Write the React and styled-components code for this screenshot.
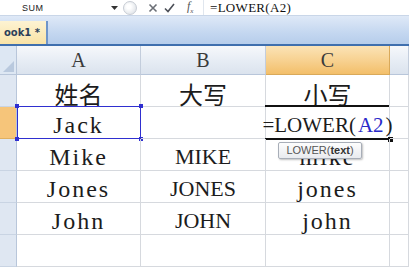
import React from 'react'
import styled, { createGlobalStyle } from 'styled-components'

const Global = createGlobalStyle`
  body {
    margin: 0;
    background: #fff;
    overflow: hidden;
  }
`

const serif = `"Liberation Serif", "Times New Roman", "DejaVu Serif", "Noto Sans CJK SC", serif`

const Page = styled.div`
  width: 409px;
  height: 272px;
  overflow: hidden;
  background: #fff;
  font-family: ${serif};
`

const FormulaBar = styled.div`
  display: flex;
  align-items: center;
  height: 15px;
  border-bottom: 1px solid #c9d6e8;
  background: #fff;
`

const NameBox = styled.div`
  width: 123px;
  display: flex;
  align-items: center;
  padding-left: 22px;
  box-sizing: border-box;
  font-family: "Liberation Sans", sans-serif;
  font-size: 9px;
  color: #222;
  letter-spacing: 0.5px;
  span {
    flex: 1;
  }
  svg {
    margin-right: 5px;
  }
`

const Tools = styled.div`
  display: flex;
  align-items: center;
  width: 80px;
  height: 15px;
  gap: 6px;
`

const Knob = styled.div`
  width: 14px;
  height: 14px;
  border-radius: 50%;
  border: 1px solid #c7ccd4;
  background: radial-gradient(circle at 40% 40%, #fff 20%, #dfe3e8 80%);
  box-sizing: border-box;
  margin-right: 5px;
`

const Fx = styled.span`
  font-family: ${serif};
  font-style: italic;
  font-size: 12px;
  color: #555;
  margin-left: 6px;
`

const FormulaText = styled.div`
  flex: 1;
  padding-left: 6px;
  border-left: 1px solid #e0e6ee;
  height: 15px;
  line-height: 15px;
  font-family: ${serif};
  font-size: 13px;
  color: #111;
  letter-spacing: 0.3px;
`

const TabStrip = styled.div`
  height: 28px;
  display: flex;
  align-items: flex-end;
  background: linear-gradient(#dfe9f7, #c4d7f0 60%, #b6cdeb);
  border-bottom: 2px solid #3f6fae;
`

const Tab = styled.div`
  width: 48px;
  height: 23px;
  display: flex;
  align-items: center;
  justify-content: flex-end;
  padding-right: 6px;
  box-sizing: border-box;
  border-right: 2px solid #6f95c9;
  background: linear-gradient(#fdf3d3, #f9e3a6);
  font-family: "DejaVu Sans", sans-serif;
  font-weight: bold;
  font-size: 10px;
  color: #2b3f5a;
  white-space: nowrap;
  overflow: hidden;
`

const Sheet = styled.div`
  display: grid;
  grid-template-columns: 17px 124px 125px 124px 19px;
  grid-template-rows: 29px repeat(6, 32px);
`

const Corner = styled.div`
  position: relative;
  background: #dde7f3;
  border-right: 1px solid #b8c6da;
  border-bottom: 1px solid #b8c6da;
  &::after {
    content: "";
    position: absolute;
    right: 2px;
    bottom: 2px;
    border-left: 11px solid transparent;
    border-bottom: 11px solid #b9c9de;
  }
`

const ColHead = styled.div`
  display: flex;
  align-items: center;
  justify-content: center;
  background: ${p => p.$active
    ? 'linear-gradient(#fbe3b6, #f7d08e 55%, #f3bf6a)'
    : 'linear-gradient(#f6f8fb, #e6ecf4 55%, #dbe3ee)'};
  border-right: 1px solid ${p => p.$active ? '#d9a95a' : '#c3cddc'};
  border-bottom: 1px solid ${p => p.$active ? '#d9a95a' : '#b8c6da'};
  font-size: 20px;
  color: #3a3a3a;
`

const RowHead = styled.div`
  background: ${p => p.$active ? '#f6c57a' : '#dfe7f2'};
  border-right: 1px solid #b8c6da;
  border-bottom: 1px solid ${p => p.$active ? '#e0b060' : '#c9d4e3'};
`

const Cell = styled.div`
  position: relative;
  display: flex;
  align-items: center;
  justify-content: center;
  border-right: 1px solid #d6d9de;
  border-bottom: 1px solid #d6d9de;
  font-size: ${p => p.$size || 22}px;
  letter-spacing: ${p => p.$spacing || 0}px;
  color: #1c1c1c;
  white-space: nowrap;
  padding-top: 5px;
  box-sizing: border-box;
`

const RefBox = styled.div`
  position: absolute;
  left: 0;
  top: -1px;
  right: -1px;
  bottom: -1px;
  border: 1.5px solid #2f2fd0;
  pointer-events: none;
  i {
    position: absolute;
    width: 4px;
    height: 4px;
    background: #2f2fd0;
  }
`

const EditBox = styled.div`
  position: absolute;
  left: -1px;
  top: -2px;
  right: 0;
  bottom: -2px;
  border-top: 2px solid #111;
  border-bottom: 2px solid #111;
  pointer-events: none;
  &::after {
    content: "";
    position: absolute;
    right: -4px;
    bottom: -4px;
    width: 5px;
    height: 5px;
    background: #111;
  }
`

const Ref = styled.span`
  color: #2929c9;
  margin: 0 2px;
`

const Tip = styled.div`
  position: absolute;
  left: 12px;
  top: 3px;
  width: 84px;
  height: 17px;
  box-sizing: border-box;
  border: 1px solid #a8aeb8;
  border-radius: 2px;
  background: linear-gradient(#fdfdfd, #e9ebef);
  box-shadow: 1px 1px 2px rgba(0, 0, 0, 0.25);
  font-family: "Liberation Sans", sans-serif;
  font-size: 11px;
  letter-spacing: 0;
  line-height: 15px;
  color: #555;
  text-align: center;
  z-index: 2;
  b {
    color: #333;
  }
`

const rows = [
  ['姓名', '大写', '小写'],
  ['Jack', '', ''],
  ['Mike', 'MIKE', 'mike'],
  ['Jones', 'JONES', 'jones'],
  ['John', 'JOHN', 'john'],
  ['', '', ''],
]

const Arrow = () => (
  <svg width="7" height="4" viewBox="0 0 7 4">
    <path d="M0 0h7L3.5 4z" fill="#333" />
  </svg>
)

const Cross = () => (
  <svg width="10" height="10" viewBox="0 0 10 10">
    <path d="M1.5 1.5l7 7M8.5 1.5l-7 7" stroke="#6b6f76" strokeWidth="1.6" />
  </svg>
)

const Check = () => (
  <svg width="11" height="10" viewBox="0 0 11 10">
    <path d="M1 5.5l3 3L10 1" stroke="#4b4f57" strokeWidth="1.6" fill="none" />
  </svg>
)

export default function App() {
  return (
    <Page>
      <Global />
      <FormulaBar>
        <NameBox>
          <span>SUM</span>
          <Arrow />
        </NameBox>
        <Tools>
          <Knob />
          <Cross />
          <Check />
          <Fx>f<sub style={{ fontSize: 7 }}>x</sub></Fx>
        </Tools>
        <FormulaText>=LOWER(A2)</FormulaText>
      </FormulaBar>
      <TabStrip>
        <Tab>ook1 *</Tab>
      </TabStrip>
      <Sheet>
        <Corner />
        <ColHead>A</ColHead>
        <ColHead>B</ColHead>
        <ColHead $active>C</ColHead>
        <ColHead />
        {rows.map((r, i) => (
          <React.Fragment key={i}>
            <RowHead $active={i === 1} />
            <Cell $spacing={i === 0 ? 0 : 2} $size={24}>
              {r[0]}
              {i === 1 && (
                <RefBox>
                  <i style={{ left: -3, top: -3 }} />
                  <i style={{ right: -3, top: -3 }} />
                  <i style={{ left: -3, bottom: -3 }} />
                  <i style={{ right: -3, bottom: -3 }} />
                </RefBox>
              )}
            </Cell>
            <Cell $size={i === 0 ? 24 : 22}>{r[1]}</Cell>
            <Cell $spacing={i === 0 || i === 1 ? 0 : 2} $size={i === 1 ? 21 : 24}>
              {i === 1 ? (
                <>
                  =LOWER(<Ref>A2</Ref>)
                  <EditBox />
                </>
              ) : r[2]}
              {i === 2 && <Tip>LOWER(<b>text</b>)</Tip>}
            </Cell>
            <Cell />
          </React.Fragment>
        ))}
      </Sheet>
    </Page>
  )
}
